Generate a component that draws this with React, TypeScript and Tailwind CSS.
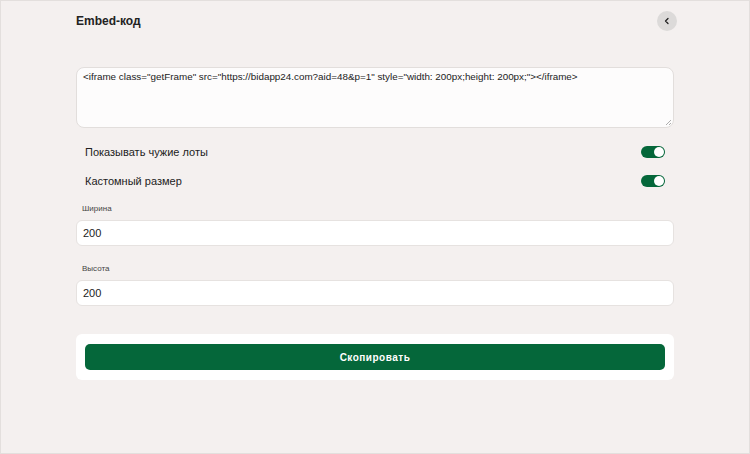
import React from "react";

function Toggle() {
  return (
    <div className="w-[24px] h-[12px] rounded-full bg-[#05673a] relative shrink-0">
      <div className="absolute right-[1px] top-[1px] w-[10px] h-[10px] rounded-full bg-white" />
    </div>
  );
}

export default function App() {
  return (
    <div
      className="w-[750px] h-[454px] bg-[#f4f0ef] border border-[#e3dfdd] flex flex-col text-[#222]"
      style={{ fontFamily: '"Liberation Sans", Arial, sans-serif' }}
    >
      <div className="flex items-center justify-between pl-[75px] pr-[72px] pt-[10px] h-[30px]">
        <div className="text-[12px] font-bold text-[#222]">Embed-код</div>
        <div className="w-[20px] h-[20px] rounded-full bg-[#dcdad9] flex items-center justify-center">
          <svg width="8" height="8" viewBox="0 0 8 8">
            <path d="M5 1.5 L2.5 4 L5 6.5" fill="none" stroke="#222" strokeWidth="1.3" strokeLinecap="round" strokeLinejoin="round" />
          </svg>
        </div>
      </div>
      <div className="px-[75px] flex flex-col">
        <div className="mt-[36px] h-[61px] bg-[#fdfcfc] border border-[#e2dedc] rounded-[8px] px-[6px] pt-[2px] relative">
          <div className="text-[9.85px] text-[#222] leading-[14px]">
            {'<iframe class="getFrame" src="https://bidapp24.com?aid=48&p=1" style="width: 200px;height: 200px;"></iframe>'}
          </div>
          <svg className="absolute right-[1px] bottom-[1px]" width="7" height="7" viewBox="0 0 7 7">
            <path d="M6 1 L1 6 M6 4 L4 6" stroke="#999" strokeWidth="0.8" />
          </svg>
        </div>
        <div className="flex items-center justify-between pl-[9px] pr-[9px] mt-[17px] h-[14px]">
          <span className="text-[11px] text-[#222]">Показывать чужие лоты</span>
          <Toggle />
        </div>
        <div className="flex items-center justify-between pl-[9px] pr-[9px] mt-[15px] h-[14px]">
          <span className="text-[11px] text-[#222]">Кастомный размер</span>
          <Toggle />
        </div>
        <div className="text-[8px] text-[#444] pl-[6px] mt-[16px] leading-[10px]">Ширина</div>
        <div className="mt-[6px] h-[26px] bg-white border border-[#e6e2e0] rounded-[6px] flex items-center px-[6px] text-[11px] text-[#222]">
          200
        </div>
        <div className="text-[8px] text-[#444] pl-[6px] mt-[18px] leading-[10px]">Высота</div>
        <div className="mt-[6px] h-[26px] bg-white border border-[#e6e2e0] rounded-[6px] flex items-center px-[6px] text-[11px] text-[#222]">
          200
        </div>
        <div className="mt-[28px] bg-white rounded-[6px] px-[9px] py-[10px]">
          <div className="h-[26px] bg-[#05673a] rounded-[5px] flex items-center justify-center text-white text-[10px] font-bold tracking-[0.5px]">
            Скопировать
          </div>
        </div>
      </div>
    </div>
  );
}
